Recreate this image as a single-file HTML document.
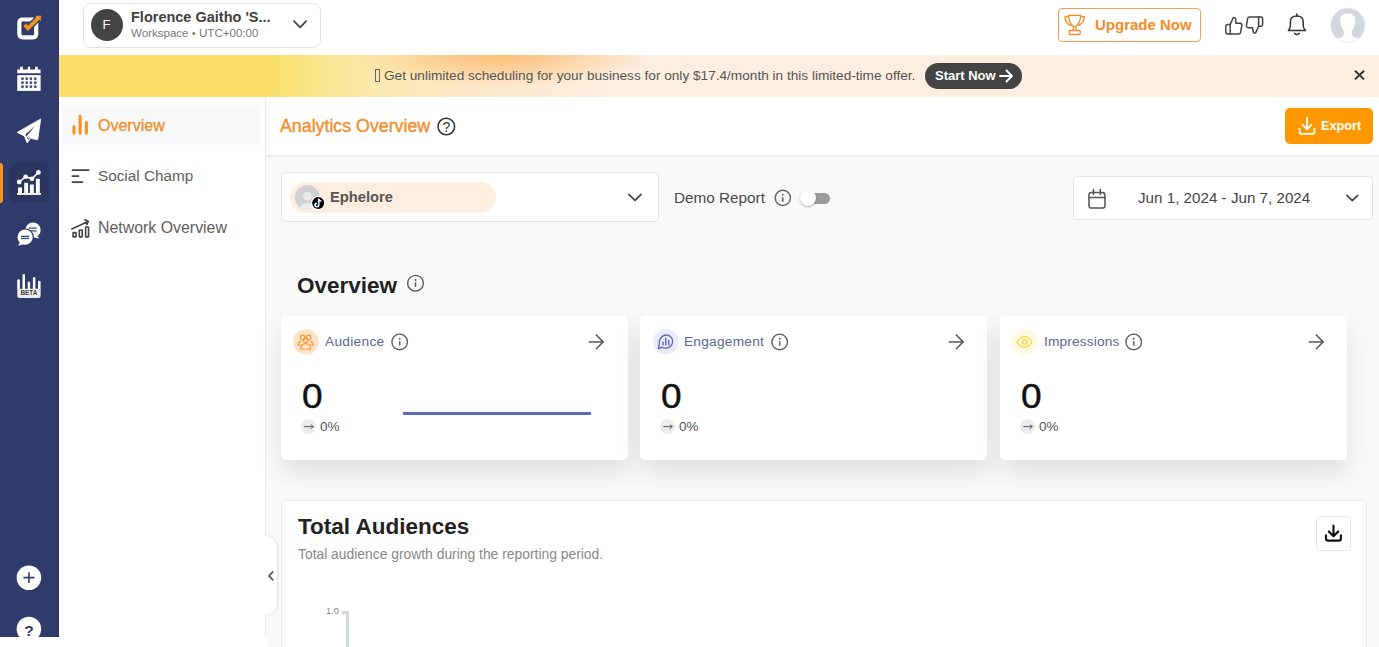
<!DOCTYPE html>
<html><head><meta charset="utf-8">
<style>
*{box-sizing:border-box;margin:0;padding:0}
html,body{width:1379px;height:647px;overflow:hidden;background:#fff;font-family:"Liberation Sans",sans-serif}
.a{position:absolute}
.t{position:absolute;white-space:nowrap;line-height:1}
svg{position:absolute;overflow:visible}
#side{left:0;top:0;width:59px;height:637px;background:#2f3b6b}
#top{left:59px;top:0;width:1320px;height:55px;background:#fff}
#ws{left:83px;top:3px;width:238px;height:45px;border:1px solid #e3e3e3;border-radius:8px;background:#fff}
#banner{left:59px;top:55px;width:1320px;height:42px;overflow:hidden;
 background:
  radial-gradient(ellipse 150px 32px at 442px 0px, rgba(252,178,92,0.8), rgba(252,178,92,0) 100%),
  linear-gradient(90deg,#f9df6a 0px,#f9df6a 215px,#fae690 265px,#fce9b0 320px,#fde9cc 420px,#fdeee0 570px,#fdeee0 100%)}
#sub{left:59px;top:97px;width:206px;height:540px;background:#fff}
#subborder{left:265px;top:97px;width:1px;height:540px;background:#ececec}
#main{left:266px;top:97px;width:1113px;height:550px;background:#f9f9f9}
#hdr{left:266px;top:97px;width:1113px;height:60px;background:#fff;border-bottom:2px solid #eeeeee}
.card{position:absolute;top:316px;height:144px;width:347px;background:#fff;border-radius:5px;box-shadow:0 12px 26px rgba(0,0,0,0.10)}
.ic{fill:none;stroke-linecap:round;stroke-linejoin:round}
</style></head><body>
<div id="side" class="a"></div>
<div id="top" class="a"></div>
<div id="ws" class="a"></div>
<div id="banner" class="a"></div>
<div id="sub" class="a"></div>
<div id="subborder" class="a"></div>
<div id="main" class="a"></div>
<div id="hdr" class="a"></div>

<!-- ===== left sidebar icons ===== -->
<svg style="left:12px;top:10px" width="34" height="34" viewBox="0 0 34 34">
 <path d="M10.6 9.5H21.1Q24.2 9.5 24.2 12.7V24.1Q24.2 27.3 21.1 27.3H10.6Q7.35 27.3 7.35 24.1V12.7Q7.35 9.5 10.6 9.5Z" fill="none" stroke="#fff" stroke-width="4.2"/>
 <path d="M15.9 18.3L27.3 7" fill="none" stroke="#2f3b6b" stroke-width="6.6"/>
 <path d="M12.7 14.8L15.9 18.3L27 7.3" fill="none" stroke="#f7941d" stroke-width="3.9" stroke-linejoin="miter"/>
 <path d="M23.7 6.3L28.7 5.9L28.6 10.6Z" fill="#f7941d" stroke="#f7941d" stroke-width="0.6" stroke-linejoin="round"/>
</svg>
<svg style="left:12px;top:62px" width="34" height="34" viewBox="0 0 34 34">
 <path d="M5.25 7.4H8.1V4.7H10.8V7.4H15.8V4.7H18.1V7.4H23.1V4.7H25.7V7.4H28.6V11.3H5.25Z" fill="#fff"/>
 <rect x="5.25" y="13.1" width="23.35" height="15.8" fill="#fff"/>
 <g fill="#4b5583">
  <circle cx="10.5" cy="16.8" r="1.45"/><circle cx="14.7" cy="16.8" r="1.45"/><circle cx="18.9" cy="16.8" r="1.45"/><circle cx="23.3" cy="16.8" r="1.45"/>
  <circle cx="10.5" cy="20.8" r="1.45"/><circle cx="14.7" cy="20.8" r="1.45"/><circle cx="18.9" cy="20.8" r="1.45"/><circle cx="23.3" cy="20.8" r="1.45"/>
  <circle cx="10.5" cy="24.7" r="1.45"/><circle cx="14.7" cy="24.7" r="1.45"/><circle cx="18.9" cy="24.7" r="1.45"/><circle cx="23.3" cy="24.7" r="1.45"/>
 </g>
</svg>
<svg style="left:12px;top:114px" width="34" height="34" viewBox="0 0 34 34">
 <path d="M28.7 4.9L5.2 18.4L12.3 21.9L15.2 28.9L18.5 24.3L25.7 25.8Z" fill="#fff" stroke="#fff" stroke-width="0.8" stroke-linejoin="round"/>
 <path d="M22.8 11.9L13.4 20.6L14.4 22.6Z" fill="#2f3b6b"/><path d="M15.2 23.3L16.3 25.2L18.2 23.6" fill="none" stroke="#2f3b6b" stroke-width="0.9"/>
</svg>
<div class="a" style="left:0;top:163px;width:3px;height:40px;border-radius:0 3px 3px 0;background:#f7941d"></div>
<div class="a" style="left:9px;top:163px;width:40px;height:40px;border-radius:7px;background:#2b3560"></div>
<svg style="left:0;top:160px" width="52" height="46" viewBox="0 0 52 46">
 <rect x="17.1" y="33" width="23.8" height="1.9" fill="#fff"/>
 <rect x="18.1" y="27.4" width="3.9" height="6" fill="#fff"/>
 <rect x="24.2" y="22.8" width="3.9" height="10.6" fill="#fff"/>
 <rect x="29.9" y="24.5" width="3.9" height="8.9" fill="#fff"/>
 <rect x="35.9" y="18.8" width="3.9" height="14.6" fill="#fff"/>
 <path d="M19.2 22L25.6 16.7L32 18.8L38.4 12.4" fill="none" stroke="#fff" stroke-width="1.5"/>
 <circle cx="19.2" cy="22" r="2.4" fill="#fff"/><circle cx="25.6" cy="16.7" r="2.3" fill="#fff"/><circle cx="32" cy="18.8" r="2.3" fill="#fff"/><circle cx="38.4" cy="12.4" r="2.4" fill="#fff"/>
</svg>
<svg style="left:12px;top:217px" width="34" height="34" viewBox="0 0 34 34">
 <ellipse cx="21" cy="12.9" rx="7.7" ry="7.4" fill="#fff"/>
 <path d="M24.5 18.5L27.6 21.6L22 20.5Z" fill="#fff"/>
 <rect x="16.8" y="10.5" width="7.9" height="1.2" fill="#2f3b6b"/>
 <rect x="18" y="13.3" width="6.7" height="1.2" fill="#2f3b6b"/>
 <circle cx="13.1" cy="20.2" r="8.9" fill="#2f3b6b"/>
 <circle cx="13.1" cy="20.2" r="7.6" fill="#fff"/>
 <path d="M8 25L6.2 28.7L11.2 27.2Z" fill="#fff"/>
 <rect x="8.9" y="18.8" width="8.2" height="1.2" fill="#2f3b6b"/>
 <rect x="8.9" y="20.9" width="8.2" height="1.2" fill="#2f3b6b"/>
</svg>
<svg style="left:12px;top:269px" width="34" height="34" viewBox="0 0 34 34">
 <g fill="#fff">
  <rect x="5.25" y="10.2" width="2.6" height="11" rx="1.3"/>
  <rect x="10.5" y="5" width="2.5" height="16" rx="1.25"/>
  <rect x="15.7" y="12.6" width="2.4" height="9" rx="1.2"/>
  <rect x="20.9" y="7.9" width="2.5" height="13" rx="1.25"/>
  <rect x="26" y="11.8" width="2.6" height="10" rx="1.3"/>
 </g>
 <rect x="5.25" y="19.7" width="23.35" height="9.2" rx="2" fill="#ececec"/>
 <text x="16.9" y="26.4" text-anchor="middle" font-family="Liberation Sans" font-weight="bold" font-size="6.4" fill="#444">BETA</text>
</svg>
<svg style="left:0;top:550px" width="59" height="87" viewBox="0 0 59 87">
 <circle cx="28.9" cy="27.8" r="12.3" fill="#fff"/>
 <path d="M23.4 27.6H34.5M28.95 22.3V32.9" stroke="#2f3b6b" stroke-width="1.6"/>
 <circle cx="28.9" cy="79" r="12.3" fill="#fff"/>
 <text x="28.9" y="86" text-anchor="middle" font-family="Liberation Sans" font-weight="bold" font-size="15.5" fill="#2f3b6b">?</text>
</svg>

<!-- ===== workspace ===== -->
<div class="a" style="left:91px;top:9px;width:32px;height:32px;border-radius:50%;background:#444"></div>
<div class="t" style="left:102.5px;top:18px;font-size:13px;color:#fff">F</div>
<div class="t" style="left:131px;top:9.5px;font-size:14.5px;font-weight:bold;color:#404040">Florence Gaitho 'S...</div>
<div class="t" style="left:131px;top:27.5px;font-size:11.55px;color:#777">Workspace • UTC+00:00</div>
<svg style="left:290px;top:17px" width="20" height="16" viewBox="0 0 20 16" class="ic"><path d="M4 4.2L10.1 10.3L16.2 4.2" stroke="#444" stroke-width="1.8"/></svg>

<!-- ===== top right ===== -->
<div class="a" style="left:1058px;top:8px;width:143px;height:34px;border:1px solid #f5a04c;border-radius:4px"></div>
<svg style="left:1060px;top:10px" width="30" height="30" viewBox="0 0 30 30" class="ic">
 <g stroke="#f28c28" stroke-width="1.3">
  <path d="M8.2 5.3H21"/>
  <path d="M8.6 5.3Q9 14.5 14.6 16.9Q20.3 14.5 20.7 5.3"/>
  <path d="M8.4 6.6H5Q5.2 13.3 11 15.6"/>
  <path d="M20.9 6.6H24.4Q24.2 13.3 18.4 15.6"/>
  <path d="M13.2 17.2V20.4M16.1 17.2V20.4"/>
  <rect x="9.2" y="20.5" width="11" height="4" rx="0.4"/>
 </g>
</svg>
<div class="t" style="left:1095px;top:17px;font-size:15px;font-weight:bold;color:#f28c28">Upgrade Now</div>
<svg style="left:1220px;top:10px" width="50" height="30" viewBox="0 0 50 30" class="ic">
 <g stroke="#444" stroke-width="1.5">
  <path d="M10.2 14.4H7.6Q5.8 14.4 5.8 16.2V22.1Q5.8 23.9 7.6 23.9H10.2Z"/>
  <path d="M10.2 14.4L13 8.2Q13.9 6.9 15 7.8Q15.9 8.6 15.8 10.6L15.9 13.2H20Q22 13.4 21.9 15.3L20.6 22.3Q20.3 23.9 18.6 23.9H10.2"/>
  <path d="M38.6 16.2H41.1Q42.6 16.2 42.6 14.6V8.6Q42.6 7 41.1 7H38.6Z"/>
  <path d="M38.6 16.2L35.9 22.4Q35 23.7 33.9 22.9Q33 22.1 32.9 20.1L32.6 17.7H28.3Q26.3 17.5 26.4 15.6L27.6 8.7Q27.9 7 29.6 7H38.6"/>
 </g>
</svg>
<svg style="left:1282px;top:8px" width="30" height="32" viewBox="0 0 30 32" class="ic">
 <g stroke="#333" stroke-width="1.5">
  <path d="M14.8 6V7.9"/>
  <path d="M6.4 22.4H23.4Q21.2 20.4 21.2 17.6V13.9Q21.2 7.9 14.8 7.9Q8.4 7.9 8.4 13.9V17.6Q8.4 20.4 6.4 22.4Z"/>
  <path d="M12.5 25.2Q14.8 27.8 17.2 25.2"/>
 </g>
</svg>
<svg style="left:1326px;top:4px" width="44" height="44" viewBox="0 0 44 44">
 <defs><clipPath id="avc"><circle cx="21.8" cy="21.4" r="17.35"/></clipPath></defs>
 <circle cx="21.8" cy="21.4" r="17.35" fill="#d3d6dd"/>
 <g clip-path="url(#avc)" fill="#fff">
  <path d="M21.8 9.4C27.3 9.4 29.5 12 29.4 16.5C29.4 18.6 29.1 20 28.7 20.7C29 21.5 28.6 22.2 28.1 22.5C27.6 24.4 26.7 26 25.8 27.2C25.3 29.6 25.8 32.3 28.4 33.6C31 34.8 34.5 34.4 37.5 33L40 44H4L6.1 33C9.1 34.4 12.6 34.8 15.2 33.6C17.8 32.3 18.3 29.6 17.8 27.2C16.9 26 16 24.4 15.5 22.5C15 22.2 14.6 21.5 14.9 20.7C14.5 20 14.2 18.6 14.2 16.5C14.1 12 16.3 9.4 21.8 9.4Z"/>
 </g>
 <circle cx="21.8" cy="21.4" r="17" fill="none" stroke="#e6e8ec" stroke-width="0.8"/>
</svg>

<!-- ===== banner ===== -->
<div class="a" style="left:374.5px;top:69px;width:5.4px;height:12.5px;border:1px solid #666"></div>
<div class="t" style="left:384px;top:69px;font-size:13.63px;color:#555">Get unlimited scheduling for your business for only $17.4/month in this limited-time offer.</div>
<div class="a" style="left:925px;top:63px;width:97px;height:26px;border-radius:13px;background:#444"></div>
<div class="t" style="left:935px;top:69px;font-size:13px;font-weight:bold;color:#fff">Start Now</div>
<svg style="left:995px;top:63px" width="24" height="26" viewBox="0 0 24 26" class="ic"><path d="M5 13H17M11.5 7.5L17 13L11.5 18.5" stroke="#fff" stroke-width="1.8"/></svg>
<svg style="left:1350px;top:66px" width="18" height="18" viewBox="0 0 18 18"><path d="M5 4.8L14 13.4M14 4.8L5 13.4" stroke="#333" stroke-width="2"/></svg>

<!-- ===== sub nav ===== -->
<div class="a" style="left:63px;top:105px;width:197px;height:40px;border-radius:4px;background:#f7f8fa"></div>
<svg style="left:66px;top:110px" width="30" height="30" viewBox="0 0 30 30" class="ic">
 <path d="M8 16.8V23.1M14.15 6.4V23.1M20.4 12.6V23.1" stroke="#f5921e" stroke-width="3.1"/>
</svg>
<div class="t" style="left:98px;top:118px;font-size:16px;color:#f28c28;-webkit-text-stroke:0.3px #f28c28">Overview</div>
<svg style="left:66px;top:161px" width="30" height="30" viewBox="0 0 30 30" class="ic">
 <path d="M6.5 9.1H22.7M6.5 15.1H12.3M6.5 21.1H16.5" stroke="#444" stroke-width="1.9"/>
</svg>
<div class="t" style="left:98px;top:168px;font-size:15.3px;color:#5e5e5e">Social Champ</div>
<svg style="left:66px;top:213px" width="30" height="30" viewBox="0 0 30 30" class="ic">
 <g stroke="#444" stroke-width="1.6">
  <path d="M5.8 15.9L22 8.5M18.8 6.8L22.3 8.3L20.8 11.5"/>
  <rect x="7.1" y="19.6" width="2.9" height="4.3" rx="0.4"/>
  <rect x="13.3" y="17" width="2.9" height="6.9" rx="0.4"/>
  <rect x="19.6" y="14" width="2.9" height="9.9" rx="0.4"/>
 </g>
</svg>
<div class="t" style="left:98px;top:220px;font-size:15.9px;color:#5e5e5e">Network Overview</div>

<!-- collapse handle -->
<div class="a" style="left:254px;top:536px;width:23px;height:79px;border-radius:0 12px 12px 0;background:#fff;box-shadow:1px 0 2px rgba(0,0,0,0.12)"></div>
<div class="a" style="left:253px;top:530px;width:12px;height:92px;background:#fff"></div>
<svg style="left:262px;top:566px" width="16" height="20" viewBox="0 0 16 20" class="ic"><path d="M10.8 5.8L7 9.8L10.8 13.8" stroke="#555" stroke-width="1.7"/></svg>

<!-- ===== header ===== -->
<div class="t" style="left:280px;top:118px;font-size:17.8px;color:#f28c28;-webkit-text-stroke:0.35px #f28c28">Analytics Overview</div>
<svg style="left:432px;top:112px" width="28" height="28" viewBox="0 0 28 28">
 <circle cx="14.3" cy="14.5" r="8.3" fill="none" stroke="#333" stroke-width="1.5"/>
 <text x="14.3" y="19.7" text-anchor="middle" font-family="Liberation Sans" font-size="14" fill="#333">?</text>
</svg>
<div class="a" style="left:1285px;top:108px;width:88px;height:36px;border-radius:5px;background:#ff9800"></div>
<svg style="left:1294px;top:114px" width="28" height="26" viewBox="0 0 28 26" class="ic">
 <g stroke="#fff" stroke-width="1.8">
  <path d="M13.05 4V15.3M8.5 10.7L13.05 15.3L17.6 10.7"/>
  <path d="M5.6 14.6V17.4Q5.6 19.9 8.1 19.9H18Q20.5 19.9 20.5 17.4V14.6"/>
 </g>
</svg>
<div class="t" style="left:1321px;top:120px;font-size:12.7px;font-weight:bold;color:#fff">Export</div>

<!-- ===== filters ===== -->
<div class="a" style="left:281px;top:172px;width:378px;height:50px;border:1px solid #e3e3e3;border-radius:5px;background:#fff"></div>
<div class="a" style="left:290px;top:182px;width:206px;height:31px;border-radius:16px;background:#fdeee0"></div>
<svg style="left:291px;top:180px" width="38" height="34" viewBox="0 0 38 34">
 <defs><clipPath id="eav"><circle cx="16.3" cy="17.6" r="12.5"/></clipPath></defs>
 <circle cx="16.3" cy="17.6" r="12.5" fill="#d0d1d4"/>
 <g clip-path="url(#eav)" fill="#ebebeb">
  <circle cx="16.3" cy="16.3" r="4.3"/>
  <ellipse cx="16.3" cy="30" rx="7.6" ry="7"/>
 </g>
 <circle cx="27.2" cy="22.9" r="7.2" fill="#fff"/>
 <circle cx="27.2" cy="22.9" r="6" fill="#000"/>
 <path d="M27.9 18.8V25.2Q27.9 27 26 27Q24.2 27 24.2 25.2Q24.2 23.4 26 23.4" fill="none" stroke="#25f4ee" stroke-width="1.2" transform="translate(-0.5,-0.3)"/>
 <path d="M27.9 18.8Q28.3 20.8 30.3 21" fill="none" stroke="#fe2c55" stroke-width="1.2" transform="translate(0.4,0.4)"/>
 <path d="M27.9 18.8V25.2Q27.9 27 26 27Q24.2 27 24.2 25.2Q24.2 23.4 26 23.4M27.9 18.8Q28.3 20.8 30.3 21" fill="none" stroke="#fff" stroke-width="1.2"/>
</svg>
<div class="t" style="left:330px;top:189.5px;font-size:14.7px;font-weight:bold;color:#555">Ephelore</div>
<svg style="left:625px;top:188px" width="20" height="20" viewBox="0 0 20 20" class="ic"><path d="M3.9 6.4L9.95 12.4L16 6.4" stroke="#444" stroke-width="1.8"/></svg>
<div class="t" style="left:674px;top:189.6px;font-size:15.3px;color:#4a4a4a">Demo Report</div>
<svg style="left:770px;top:184px" width="28" height="28" viewBox="0 0 28 28">
 <circle cx="12.8" cy="13.9" r="7.6" fill="none" stroke="#666" stroke-width="1.5"/>
 <circle cx="12.7" cy="10.8" r="0.95" fill="#666"/>
 <path d="M12.7 13.4V17.8" stroke="#666" stroke-width="1.7"/>
</svg>
<div class="a" style="left:804px;top:193px;width:26px;height:11px;border-radius:6px;background:#9a9a9a"></div>
<div class="a" style="left:800px;top:190px;width:16px;height:16px;border-radius:50%;background:#fff;box-shadow:0 1px 2px rgba(0,0,0,0.3)"></div>
<div class="a" style="left:1073px;top:176px;width:300px;height:44px;border:1px solid #e3e3e3;border-radius:4px;background:#fff"></div>
<svg style="left:1083px;top:184.7px" width="28" height="28" viewBox="0 0 28 28" class="ic">
 <g stroke="#555" stroke-width="1.5">
  <rect x="5.95" y="7.45" width="16" height="15.6" rx="2.6"/>
  <path d="M5.95 12.6H21.95M10.4 4.6V9.6M17.3 4.6V9.6"/>
 </g>
</svg>
<div class="t" style="left:1138px;top:189.8px;font-size:15.2px;color:#444">Jun 1, 2024 - Jun 7, 2024</div>
<svg style="left:1342px;top:188px" width="20" height="20" viewBox="0 0 20 20" class="ic"><path d="M4.9 7.4L10.3 12.7L15.7 7.4" stroke="#444" stroke-width="1.7"/></svg>

<!-- ===== overview ===== -->
<div class="t" style="left:297px;top:275px;font-size:22.5px;font-weight:bold;color:#222">Overview</div>
<svg style="left:403px;top:271px" width="24" height="24" viewBox="0 0 24 24">
 <circle cx="12.5" cy="12.2" r="7.9" fill="none" stroke="#555" stroke-width="1.3"/>
 <circle cx="12.5" cy="9" r="0.9" fill="#555"/>
 <path d="M12.5 11.3V15.8" stroke="#555" stroke-width="1.5"/>
</svg>
<div class="card" style="left:281px"></div>
<div class="card" style="left:640px"></div>
<div class="card" style="left:1000px"></div>

<!-- card 1 -->
<svg style="left:290px;top:326px" width="32" height="32" viewBox="0 0 32 32" class="ic">
 <circle cx="15.8" cy="15.8" r="12.9" fill="#fde3cc" stroke="none"/>
 <g stroke="#f7941d" stroke-width="1.05">
  <circle cx="12.6" cy="11.4" r="2.3"/>
  <circle cx="18.7" cy="11.4" r="2.3"/>
  <circle cx="15.6" cy="14.3" r="2.2"/>
  <path d="M10.6 15.2Q8.2 16 8.1 19.2H11.2"/>
  <path d="M20.6 15.2Q23 16 23.1 19.2H20"/>
  <path d="M10.6 22.9Q10.8 18 15.6 17.6Q20.4 18 20.6 22.9H16.6M10.6 22.9H14.4"/>
 </g>
</svg>
<div class="t" style="left:325px;top:334.9px;font-size:13.7px;letter-spacing:0.3px;color:#5a6591">Audience</div>
<svg style="left:386px;top:328px" width="28" height="28" viewBox="0 0 28 28">
 <circle cx="13.7" cy="13.9" r="7.8" fill="none" stroke="#606060" stroke-width="1.4"/>
 <circle cx="13.7" cy="10.7" r="0.95" fill="#606060"/>
 <path d="M13.7 13.2V17.6" stroke="#606060" stroke-width="1.5"/>
</svg>
<svg style="left:582px;top:328px" width="28" height="28" viewBox="0 0 28 28" class="ic"><path d="M7.1 13.9H21.2M14.3 7.1L21.2 13.9L14.3 20.8" stroke="#5a5a5a" stroke-width="1.5"/></svg>
<div class="t" style="left:301.5px;top:378px;font-size:35px;color:#111;-webkit-text-stroke:0.45px #111;transform:scaleX(1.06);transform-origin:0 0">0</div>
<div class="a" style="left:402.5px;top:412px;width:188px;height:3px;background:#5c6bc0"></div>
<div class="a" style="left:301px;top:419px;width:15.4px;height:15.4px;border-radius:50%;background:#ececec"></div>
<svg style="left:301px;top:419px" width="16" height="16" viewBox="0 0 16 16" class="ic"><path d="M3.6 7.6H12.2M10 5.6L12.2 7.6L10 9.6" stroke="#555" stroke-width="1"/></svg>
<div class="t" style="left:320px;top:419.5px;font-size:13.5px;color:#555">0%</div>

<!-- card 2 -->
<svg style="left:650px;top:326px" width="32" height="32" viewBox="0 0 32 32" class="ic">
 <circle cx="15.8" cy="15.8" r="12.8" fill="#ebeaf8" stroke="none"/>
 <g stroke="#5c6bc0" stroke-width="1.3">
  <path d="M9.3 17.6Q9 13.5 11.4 11.2Q13.5 9 16.1 9Q19.2 9 21.1 11.2Q22.8 13.2 22.6 16Q22.4 18.8 20.2 20.6Q18.2 22.2 15.6 22.1Q13.6 22 11.8 21.1L8.4 22.8Z"/>
  <path d="M13 16.2V18.8M15.8 12.3V18.8M18.8 14.6V18.8" stroke-width="1.5"/>
 </g>
</svg>
<div class="t" style="left:684px;top:334.9px;font-size:13.7px;letter-spacing:0.24px;color:#5a6591">Engagement</div>
<svg style="left:766px;top:328px" width="28" height="28" viewBox="0 0 28 28">
 <circle cx="13.7" cy="13.9" r="7.8" fill="none" stroke="#606060" stroke-width="1.4"/>
 <circle cx="13.7" cy="10.7" r="0.95" fill="#606060"/>
 <path d="M13.7 13.2V17.6" stroke="#606060" stroke-width="1.5"/>
</svg>
<svg style="left:942px;top:328px" width="28" height="28" viewBox="0 0 28 28" class="ic"><path d="M7.1 13.9H21.2M14.3 7.1L21.2 13.9L14.3 20.8" stroke="#5a5a5a" stroke-width="1.5"/></svg>
<div class="t" style="left:660.5px;top:378px;font-size:35px;color:#111;-webkit-text-stroke:0.45px #111;transform:scaleX(1.06);transform-origin:0 0">0</div>
<div class="a" style="left:660px;top:419px;width:15.4px;height:15.4px;border-radius:50%;background:#ececec"></div>
<svg style="left:660px;top:419px" width="16" height="16" viewBox="0 0 16 16" class="ic"><path d="M3.6 7.6H12.2M10 5.6L12.2 7.6L10 9.6" stroke="#555" stroke-width="1"/></svg>
<div class="t" style="left:679px;top:419.5px;font-size:13.5px;color:#555">0%</div>

<!-- card 3 -->
<svg style="left:1009px;top:326px" width="32" height="32" viewBox="0 0 32 32" class="ic">
 <circle cx="15.8" cy="15.8" r="12.9" fill="#fdf9e3" stroke="none"/>
 <g stroke="#fcd535" stroke-width="1.4">
  <path d="M8 15.9Q11.5 10.6 15.5 10.6Q19.5 10.6 23 15.9Q19.5 21.3 15.5 21.3Q11.5 21.3 8 15.9Z"/>
  <circle cx="15.6" cy="15.9" r="2.2"/>
 </g>
</svg>
<div class="t" style="left:1044px;top:334.9px;font-size:13.7px;letter-spacing:0.16px;color:#5a6591">Impressions</div>
<svg style="left:1120px;top:328px" width="28" height="28" viewBox="0 0 28 28">
 <circle cx="13.7" cy="13.9" r="7.8" fill="none" stroke="#606060" stroke-width="1.4"/>
 <circle cx="13.7" cy="10.7" r="0.95" fill="#606060"/>
 <path d="M13.7 13.2V17.6" stroke="#606060" stroke-width="1.5"/>
</svg>
<svg style="left:1302px;top:328px" width="28" height="28" viewBox="0 0 28 28" class="ic"><path d="M7.1 13.9H21.2M14.3 7.1L21.2 13.9L14.3 20.8" stroke="#5a5a5a" stroke-width="1.5"/></svg>
<div class="t" style="left:1020.5px;top:378px;font-size:35px;color:#111;-webkit-text-stroke:0.45px #111;transform:scaleX(1.06);transform-origin:0 0">0</div>
<div class="a" style="left:1020px;top:419px;width:15.4px;height:15.4px;border-radius:50%;background:#ececec"></div>
<svg style="left:1020px;top:419px" width="16" height="16" viewBox="0 0 16 16" class="ic"><path d="M3.6 7.6H12.2M10 5.6L12.2 7.6L10 9.6" stroke="#555" stroke-width="1"/></svg>
<div class="t" style="left:1039px;top:419.5px;font-size:13.5px;color:#555">0%</div>

<!-- ===== total audiences ===== -->
<div class="a" style="left:281px;top:500px;width:1086px;height:160px;border:1px solid #ebebeb;border-radius:5px;background:#fff"></div>
<div class="t" style="left:298px;top:516px;font-size:22.5px;font-weight:bold;color:#222">Total Audiences</div>
<div class="t" style="left:298px;top:548.3px;font-size:13.87px;color:#888">Total audience growth during the reporting period.</div>
<div class="a" style="left:1316px;top:516px;width:35px;height:35px;border:1px solid #e6e6e6;border-radius:5px;background:#fff"></div>
<svg style="left:1310px;top:510px" width="46" height="46" viewBox="0 0 46 46" class="ic">
 <g stroke="#111" stroke-width="2.1">
  <path d="M23.5 15.6V26.3M18.8 21.4L23.5 26.3L28.2 21.4"/>
  <path d="M16 25.4V28.4Q16 30.6 18.2 30.6H28.7Q30.9 30.6 30.9 28.4V25.4"/>
 </g>
</svg>
<div class="t" style="left:326px;top:607px;font-size:9.2px;color:#888">1.0</div>
<div class="a" style="left:341.8px;top:611px;width:7.2px;height:2.8px;background:#d3d8dc"></div>
<div class="a" style="left:346px;top:611px;width:3px;height:40px;background:#d3d8dc"></div>

<!-- bottom white strip -->
<div class="a" style="left:0;top:637px;width:268px;height:10px;background:#fff"></div>
</body></html>
